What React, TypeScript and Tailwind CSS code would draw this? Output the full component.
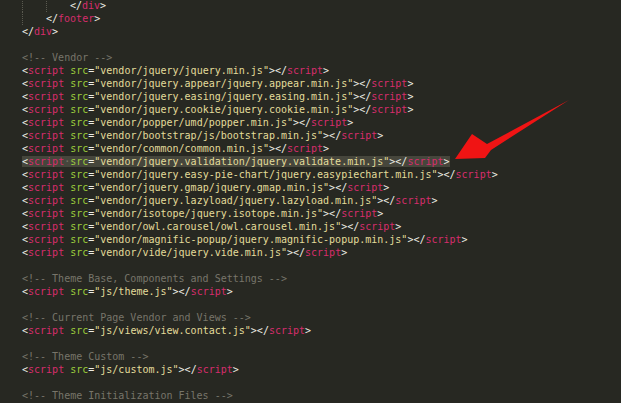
import React from "react";

const TAG = "text-[#d62d6c]";
const ATTR = "text-[#9ccc3c]";
const STR = "text-[#e3dc9a]";
const PUNC = "text-[#eeeee6]";
const COMMENT = "text-[#77756a]";

const scripts = [
  "vendor/jquery/jquery.min.js",
  "vendor/jquery.appear/jquery.appear.min.js",
  "vendor/jquery.easing/jquery.easing.min.js",
  "vendor/jquery.cookie/jquery.cookie.min.js",
  "vendor/popper/umd/popper.min.js",
  "vendor/bootstrap/js/bootstrap.min.js",
  "vendor/common/common.min.js",
  "vendor/jquery.validation/jquery.validate.min.js",
  "vendor/jquery.easy-pie-chart/jquery.easypiechart.min.js",
  "vendor/jquery.gmap/jquery.gmap.min.js",
  "vendor/jquery.lazyload/jquery.lazyload.min.js",
  "vendor/isotope/jquery.isotope.min.js",
  "vendor/owl.carousel/owl.carousel.min.js",
  "vendor/magnific-popup/jquery.magnific-popup.min.js",
  "vendor/vide/jquery.vide.min.js",
];

function Guide() {
  return (
    <span className="inline-block w-[24px] h-[13px] align-top box-border border-l border-dotted border-[#5a5a50]" />
  );
}

function Line({ children }: { children?: React.ReactNode }) {
  return <div className="h-[13px] leading-[13px] whitespace-pre">{children}</div>;
}

function Script({ src, selected }: { src: string; selected?: boolean }) {
  return (
    <Line>
      <span className={selected ? "bg-[#46463c]" : ""}>
        <span className={PUNC}>&lt;</span>
        <span className={TAG}>script</span>
        {selected ? <span className="text-[#77776a]">·</span> : " "}
        <span className={ATTR}>src</span>
        <span className={PUNC}>=</span>
        <span className={STR}>"{src}"</span>
        <span className={PUNC}>&gt;&lt;/</span>
        <span className={TAG}>script</span>
        <span className={PUNC}>&gt;</span>
      </span>
    </Line>
  );
}

function Comment({ text }: { text: string }) {
  return (
    <Line>
      <span className={COMMENT}>{`<!-- ${text} -->`}</span>
    </Line>
  );
}

function Close({ name }: { name: string }) {
  return (
    <>
      <span className={PUNC}>&lt;/</span>
      <span className={TAG}>{name}</span>
      <span className={PUNC}>&gt;</span>
    </>
  );
}

export default function App() {
  return (
    <div className="relative w-[621px] h-[403px] overflow-hidden bg-[#272822]">
      <div
        className="pl-[22px] -mt-[1px] text-[10px]"
        style={{ fontFamily: '"DejaVu Sans Mono", "Liberation Mono", monospace' }}
      >
        <Line>
          <Guide />
          <Guide />
          <Close name="div" />
        </Line>
        <Line>
          <Guide />
          <Close name="footer" />
        </Line>
        <Line>
          <Close name="div" />
        </Line>
        <Line />
        <Comment text="Vendor" />
        {scripts.map((s, i) => (
          <Script key={s} src={s} selected={i === 7} />
        ))}
        <Line />
        <Comment text="Theme Base, Components and Settings" />
        <Script src="js/theme.js" />
        <Line />
        <Comment text="Current Page Vendor and Views" />
        <Script src="js/views/view.contact.js" />
        <Line />
        <Comment text="Theme Custom" />
        <Script src="js/custom.js" />
        <Line />
        <Comment text="Theme Initialization Files" />
      </div>
      <svg
        className="absolute left-0 top-0 pointer-events-none"
        width="621"
        height="403"
        viewBox="0 0 621 403"
      >
        <polygon
          points="569,100 487,144 472,134 455,159 485,158 491,150"
          fill="#f01414"
        />
      </svg>
    </div>
  );
}
